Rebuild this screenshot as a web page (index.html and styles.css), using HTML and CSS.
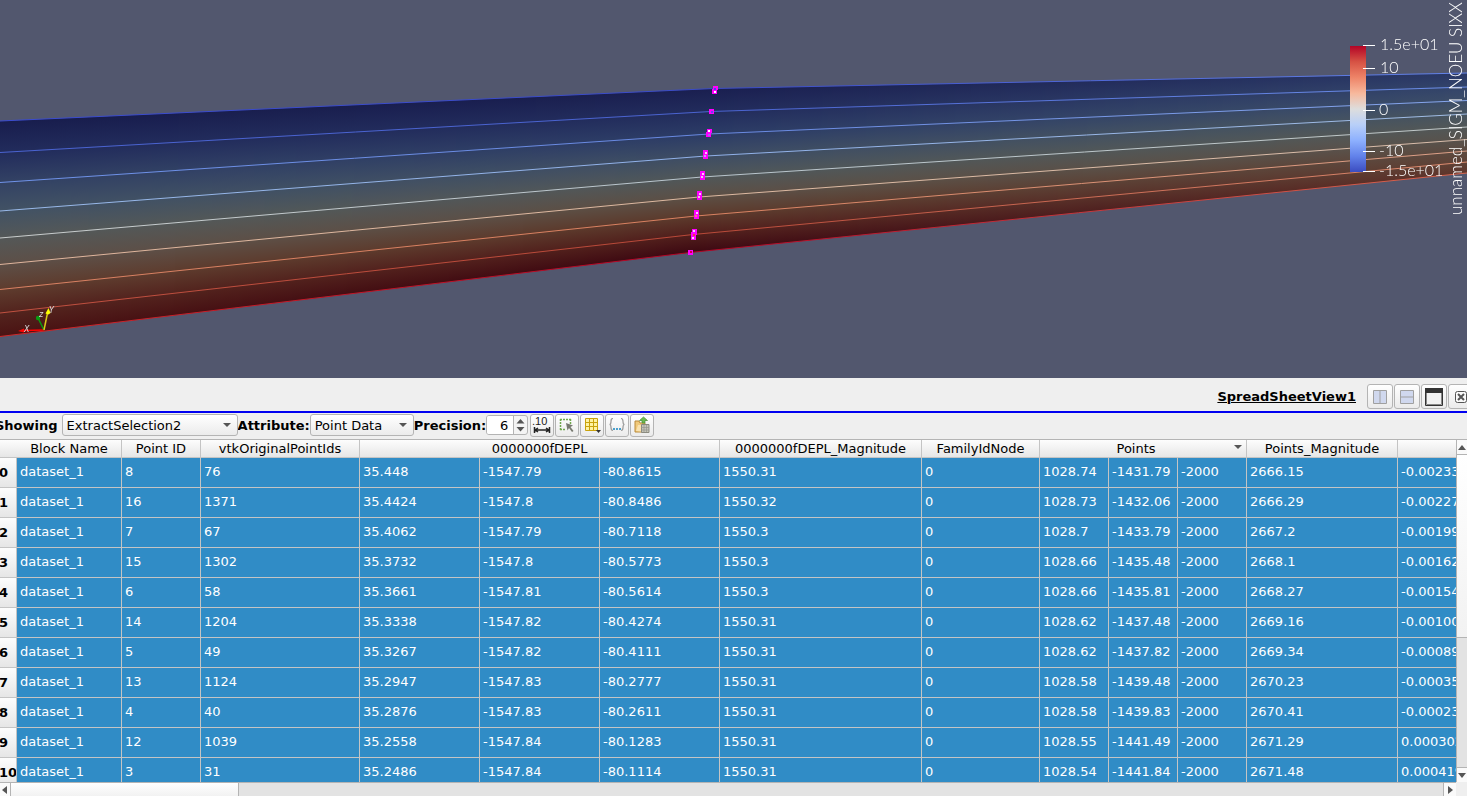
FILE: index.html
```html
<!DOCTYPE html>
<html lang="en">
<head>
    <meta charset="UTF-8">
    <meta name="viewport" content="width=device-width, initial-scale=1.0">
    <title>SpreadSheetView1</title>
    <link rel="stylesheet" href="styles.css">
</head>
<body>

    <section class="scene">
        <canvas id="render" class="render"></canvas>

        <svg class="axes" width="60" height="40" viewBox="0 0 60 40">
            <path d="M44 30L24 30.5" stroke="#f00" stroke-width="1.5"/>
            <path d="M18 31l6-2.5v4z" fill="#f00"/>
            <path d="M44 30L38.500 19" stroke="#0a9a12" stroke-width="1.500"/>
            <circle cx="38" cy="18" r="2.200" fill="#0a9a12"/>
            <path d="M44 30L47.500 13" stroke="#d8c81c" stroke-width="1.500"/>
            <path d="M48.500 8l2 5-2 1.500-3-1z" fill="#ff0"/>
            <text x="24" y="32">X</text>
            <text x="49" y="13">Y</text>
            <text x="39" y="17">z</text>
        </svg>

        <svg class="legend" width="127" height="220" viewBox="0 0 127 220">
            <defs>
                <linearGradient id="coolwarm" x1="0" y1="0" x2="0" y2="1">
                    <stop offset="0" stop-color="#b40426"/>
                    <stop offset="0.125" stop-color="#d65244"/>
                    <stop offset="0.25" stop-color="#ee8468"/>
                    <stop offset="0.375" stop-color="#f7b89c"/>
                    <stop offset="0.5" stop-color="#dddddd"/>
                    <stop offset="0.625" stop-color="#b8cff8"/>
                    <stop offset="0.75" stop-color="#8db0fe"/>
                    <stop offset="0.875" stop-color="#6282ea"/>
                    <stop offset="1" stop-color="#3b4cc0"/>
                </linearGradient>
            </defs>
            <rect x="10" y="46" width="16" height="126" fill="url(#coolwarm)"/>
            <path d="M23 45.500h12M23 68.500h12M23 110.500h12M23 151.500h12M23 171.500h12" stroke="#fff"/>
            <text x="40" y="50">1.5e+01</text>
            <text x="40" y="73">10</text>
            <text x="39" y="115">0</text>
            <text x="39" y="156">-10</text>
            <text x="39" y="176">-1.5e+01</text>
            <text class="legend-title" transform="translate(122 215) rotate(-90)">unnamed_SIGM_NOEU SIXX</text>
        </svg>
    </section>

    <main class="panel">
        <header class="view-header">
            <h1>SpreadSheetView1</h1>
            <div class="view-buttons">
                <button type="button" aria-label="Split horizontal">
                    <svg width="16" height="16"><path d="M1.500 1.500h13v13h-13z" fill="#d0d8ee" stroke="#a0a0a0"/><path d="M8 1v14" stroke="#a0a0a0"/></svg>
                </button>
                <button type="button" aria-label="Split vertical">
                    <svg width="16" height="16"><path d="M1.500 1.500h13v13h-13z" fill="#d0d8ee" stroke="#a0a0a0"/><path d="M1 8h14" stroke="#a0a0a0"/></svg>
                </button>
                <button type="button" aria-label="Maximize">
                    <svg width="18" height="18"><path d="M.5.5h17v17H.5z" fill="#f2f2f2" stroke="#333"/><path d="M0 0h18v5H0z" fill="#333"/><path d="M1.500 5v11.500h15V5" fill="none" stroke="#888"/></svg>
                </button>
                <button type="button" aria-label="Close">
                    <svg width="12" height="12"><rect x=".5" y=".5" width="11" height="11" rx="2" fill="#fafafa" stroke="#555"/><path d="M3 3l6 6M9 3l-6 6" stroke="#555" stroke-width="2"/></svg>
                </button>
            </div>
        </header>

        <div class="toolbar">
            <label for="showing">Showing</label>
            <span class="combo combo-showing">
                <select id="showing"><option>ExtractSelection2</option></select>
            </span>
            <label for="attribute">Attribute:</label>
            <span class="combo combo-attribute">
                <select id="attribute"><option>Point Data</option></select>
            </span>
            <label for="precision">Precision:</label>
            <span class="spin">
                <input id="precision" type="number" value="6">
                <svg width="13" height="18"><path d="M2.500 7.500h8L6.500 3zM2.500 11h8l-4 4.500z" fill="#555"/></svg>
            </span>
            <div class="tools">
                <button type="button" aria-label="Fixed representation">
                    <svg width="18" height="18"><text x="-1" y="9" class="fixed-label">.10</text><path d="M1.500 11v6M16.500 11v6M3 14h12M5 12l-3 2 3 2M13 12l3 2-3 2" fill="none" stroke="#222" stroke-width="1.500"/></svg>
                </button>
                <button type="button" aria-label="Show only selected elements">
                    <svg width="18" height="18"><path d="M2 3.500h11M2 13.500h6M2.500 3v11M12.500 3v5" fill="none" stroke="#6fa84c" stroke-width="1.500" stroke-dasharray="2 1"/><path d="M8 7l7 2.500-2.500 1.500 3 4-1.500 1-3-4-1.500 2.500z" fill="#77796f"/></svg>
                </button>
                <button type="button" aria-label="Toggle column visibility">
                    <svg width="18" height="18"><path d="M2.500 2.500h12v12h-12zM6.500 2v13M10.500 2v13M2 6.500h13M2 10.500h13" fill="#fff3a0" stroke="#c9a20c"/><path d="M13 14h5l-2.500 3z" fill="#333"/></svg>
                </button>
                <button type="button" aria-label="Toggle cell connectivity">
                    <svg width="18" height="18"><path d="M5 2.500c-2 0-2 1-2 3s0 3-1.500 3c1.500 0 1.500 1 1.500 3s0 3 2 3M13 2.500c2 0 2 1 2 3s0 3 1.500 3c-1.500 0-1.500 1-1.500 3s0 3-2 3" fill="none" stroke="#999" stroke-width="1.200"/><path d="M5 12h2v2H5zM8 12h2v2H8zM11 12h2v2h-2z" fill="#4ba0cc"/></svg>
                </button>
                <button type="button" aria-label="Export spreadsheet">
                    <svg width="18" height="18"><path d="M2 5h4l1 2h5v9H2z" fill="#f0c97a" stroke="#b98a3a"/><path d="M3 15l2-6h8v7z" fill="#fae2ae"/><path d="M8.500 8.500h7.500v8H8.500z" fill="#c4c4b8" stroke="#8b8b80"/><path d="M8 11.500h8M8 14h8M11 9v7M13.500 9v7" stroke="#97978c" stroke-width=".7"/><path d="M6.500 4.500L10.500 1l4 3.500h-2.500V7h-3V4.500z" fill="#6dbb52" stroke="#478c34" stroke-width=".7"/></svg>
                </button>
            </div>
        </div>

        <div class="sheet">
            <div class="sheet-view">
                <table>
                    <colgroup>
                        <col class="w-row"><col class="w-block"><col class="w-id"><col class="w-orig">
                        <col class="w-depl"><col class="w-depl"><col class="w-depl"><col class="w-mag">
                        <col class="w-family"><col class="w-point"><col class="w-point"><col class="w-point">
                        <col class="w-pmag"><col class="w-last">
                    </colgroup>
                    <thead>
                        <tr>
                            <th></th>
                            <th>Block Name</th>
                            <th>Point ID</th>
                            <th>vtkOriginalPointIds</th>
                            <th colspan="3">0000000fDEPL</th>
                            <th>0000000fDEPL_Magnitude</th>
                            <th>FamilyIdNode</th>
                            <th colspan="3" class="sorted">Points</th>
                            <th>Points_Magnitude</th>
                            <th></th>
                        </tr>
                    </thead>
                    <tbody>
                        <tr><th>0</th><td>dataset_1</td><td>8</td><td>76</td><td>35.448</td><td>-1547.79</td><td>-80.8615</td><td>1550.31</td><td>0</td><td>1028.74</td><td>-1431.79</td><td>-2000</td><td>2666.15</td><td>-0.00233</td></tr>
                        <tr><th>1</th><td>dataset_1</td><td>16</td><td>1371</td><td>35.4424</td><td>-1547.8</td><td>-80.8486</td><td>1550.32</td><td>0</td><td>1028.73</td><td>-1432.06</td><td>-2000</td><td>2666.29</td><td>-0.00227</td></tr>
                        <tr><th>2</th><td>dataset_1</td><td>7</td><td>67</td><td>35.4062</td><td>-1547.79</td><td>-80.7118</td><td>1550.3</td><td>0</td><td>1028.7</td><td>-1433.79</td><td>-2000</td><td>2667.2</td><td>-0.00199</td></tr>
                        <tr><th>3</th><td>dataset_1</td><td>15</td><td>1302</td><td>35.3732</td><td>-1547.8</td><td>-80.5773</td><td>1550.3</td><td>0</td><td>1028.66</td><td>-1435.48</td><td>-2000</td><td>2668.1</td><td>-0.00162</td></tr>
                        <tr><th>4</th><td>dataset_1</td><td>6</td><td>58</td><td>35.3661</td><td>-1547.81</td><td>-80.5614</td><td>1550.3</td><td>0</td><td>1028.66</td><td>-1435.81</td><td>-2000</td><td>2668.27</td><td>-0.00154</td></tr>
                        <tr><th>5</th><td>dataset_1</td><td>14</td><td>1204</td><td>35.3338</td><td>-1547.82</td><td>-80.4274</td><td>1550.31</td><td>0</td><td>1028.62</td><td>-1437.48</td><td>-2000</td><td>2669.16</td><td>-0.00100</td></tr>
                        <tr><th>6</th><td>dataset_1</td><td>5</td><td>49</td><td>35.3267</td><td>-1547.82</td><td>-80.4111</td><td>1550.31</td><td>0</td><td>1028.62</td><td>-1437.82</td><td>-2000</td><td>2669.34</td><td>-0.00089</td></tr>
                        <tr><th>7</th><td>dataset_1</td><td>13</td><td>1124</td><td>35.2947</td><td>-1547.83</td><td>-80.2777</td><td>1550.31</td><td>0</td><td>1028.58</td><td>-1439.48</td><td>-2000</td><td>2670.23</td><td>-0.00035</td></tr>
                        <tr><th>8</th><td>dataset_1</td><td>4</td><td>40</td><td>35.2876</td><td>-1547.83</td><td>-80.2611</td><td>1550.31</td><td>0</td><td>1028.58</td><td>-1439.83</td><td>-2000</td><td>2670.41</td><td>-0.00023</td></tr>
                        <tr><th>9</th><td>dataset_1</td><td>12</td><td>1039</td><td>35.2558</td><td>-1547.84</td><td>-80.1283</td><td>1550.31</td><td>0</td><td>1028.55</td><td>-1441.49</td><td>-2000</td><td>2671.29</td><td>0.000302</td></tr>
                        <tr><th>10</th><td>dataset_1</td><td>3</td><td>31</td><td>35.2486</td><td>-1547.84</td><td>-80.1114</td><td>1550.31</td><td>0</td><td>1028.54</td><td>-1441.84</td><td>-2000</td><td>2671.48</td><td>0.000419</td></tr>
                    </tbody>
                </table>
            </div>
            <div class="scroll-v">
                <span class="step"><svg width="8" height="5"><path d="M0 5h8L4 0z"/></svg></span>
                <span class="thumb"></span>
                <span class="track"></span>
                <span class="step"><svg width="8" height="5"><path d="M0 0h8L4 5z"/></svg></span>
            </div>
            <div class="scroll-h">
                <span class="step"><svg width="5" height="8"><path d="M5 0v8L0 4z"/></svg></span>
                <span class="thumb"></span>
                <span class="track"></span>
                <span class="step"><svg width="5" height="8"><path d="M0 0v8l5-4z"/></svg></span>
            </div>
        </div>
    </main>

    <script src="scene.js"></script>
</body>
</html>
```
FILE: styles.css
```css
* {
    box-sizing: border-box;
}

body {
    margin: 0;
    height: 100vh;
    display: flex;
    flex-direction: column;
    overflow: hidden;
    background-color: #efefef;
    color: #000;
    font-family: "DejaVu Sans", sans-serif;
    font-size: 13px;
}

svg {
    display: block;
    flex: none;
}

/* 3D view */
.scene {
    position: relative;
    flex: none;
    height: 378px;
    background-color: #52576e;
}

.render {
    display: block;
    width: 100%;
    height: 100%;
}

.axes {
    position: absolute;
    left: 0;
    bottom: 38px;
    fill: #ddd;
    font-size: 8px;
    font-style: italic;
}

.legend {
    position: absolute;
    top: 0;
    right: 0;
    fill: #fff;
    font-family: Lato, sans-serif;
    font-size: 16px;
    font-weight: 300;
}

.legend-title {
    font-size: 17px;
}

/* spreadsheet */
.panel {
    flex: 1;
    min-height: 0;
    margin-left: -2px;
    display: flex;
    flex-direction: column;
}

.view-header {
    flex: none;
    height: 35px;
    display: flex;
    justify-content: flex-end;
    align-items: center;
    gap: 11px;
    padding-top: 4px;
    border-bottom: 2px solid #0000f0;
}

.view-header h1 {
    margin: 0;
    font-size: 13px;
    text-decoration: underline;
}

.view-buttons {
    display: flex;
    gap: 1px;
    margin-right: -7px;
}

button {
    display: flex;
    align-items: center;
    justify-content: center;
    width: 24px;
    height: 23px;
    padding: 0;
    border: 1px solid #b4b4b4;
    border-radius: 3px;
    background: linear-gradient(#fff, #ebebeb);
}

.view-buttons button {
    width: 26px;
    height: 25px;
}

.toolbar {
    flex: none;
    height: 26px;
    margin-left: -3px;
    padding-bottom: 2px;
    display: flex;
    align-items: center;
}

.toolbar label {
    font-weight: bold;
    white-space: nowrap;
}

.tools {
    display: flex;
    gap: 1px;
}

.combo {
    position: relative;
    height: 22px;
}

.combo-showing {
    width: 176px;
    margin-left: 4px;
}

.combo-attribute {
    width: 104px;
}

.combo select {
    appearance: none;
    width: 100%;
    height: 100%;
    padding: 0 4px;
    border: 1px solid #b4b4b4;
    border-radius: 3px;
    background: linear-gradient(#fff, #ebebeb);
    color: #000;
    font: inherit;
}

.combo::after {
    content: "";
    position: absolute;
    top: 9px;
    right: 7px;
    border: 4px solid transparent;
    border-top-color: #555;
    border-bottom: 0;
    pointer-events: none;
}

.spin {
    display: flex;
    width: 42px;
    height: 20px;
    margin-right: 2px;
    border: 1px solid #b4b4b4;
    border-radius: 3px;
    background-color: #f4f4f4;
    overflow: hidden;
}

.spin input {
    width: 27px;
    padding: 0 5px 0 0;
    border: 0;
    border-right: 1px solid #b4b4b4;
    background-color: #fff;
    font: inherit;
    text-align: right;
    appearance: textfield;
}

.spin input::-webkit-inner-spin-button {
    display: none;
}

.tools svg {
    overflow: visible;
}

.fixed-label {
    font-size: 11px;
    fill: #222;
}

.sheet {
    flex: 1;
    min-height: 0;
    display: grid;
    grid-template-columns: minmax(0, 1fr) 11px;
    grid-template-rows: minmax(0, 1fr) 14px;
    border-top: 1px solid #b4b4b4;
}

.sheet-view {
    overflow: hidden;
    background-color: #fff;
}

table {
    width: 1490px;
    table-layout: fixed;
    border-collapse: separate;
    border-spacing: 0;
}

.w-row { width: 19px; }
.w-block { width: 105px; }
.w-id { width: 79px; }
.w-orig { width: 159px; }
.w-depl { width: 120px; }
.w-mag { width: 202px; }
.w-family { width: 118px; }
.w-point { width: 69px; }
.w-pmag { width: 151px; }

th,
td {
    padding: 0 3px;
    white-space: nowrap;
    overflow: hidden;
    border-right: 1px solid #c4c4c4;
    border-bottom: 1px solid #c4c4c4;
}

thead th {
    height: 18px;
    padding: 0;
    line-height: 17px;
    font-weight: normal;
    background: linear-gradient(#fdfdfd, #e6e6e6);
}

thead th:first-child {
    border-right: 0;
}

thead .sorted {
    position: relative;
    padding-right: 14px;
}

.sorted::after {
    content: "";
    position: absolute;
    top: 5px;
    right: 4px;
    border: 4px solid transparent;
    border-top-color: #555;
    border-bottom: 0;
}

tbody tr {
    height: 30px;
}

tbody th {
    padding: 0 0 0 1px;
    text-align: left;
    background: linear-gradient(#fdfdfd, #e6e6e6);
}

td {
    height: 30px;
    line-height: 28px;
    padding-bottom: 1px;
    background-color: #308cc6;
    color: #fff;
}

.scroll-v,
.scroll-h {
    display: flex;
    overflow: hidden;
    background-color: #e3e3e3;
}

.scroll-v {
    flex-direction: column;
    border-left: 1px solid #b4b4b4;
}

.scroll-h {
    border-top: 1px solid #b4b4b4;
}

.step {
    flex: none;
    display: flex;
    align-items: center;
    justify-content: center;
    background-color: #fafafa;
    fill: #555;
}

.scroll-v .step {
    height: 14px;
}

.scroll-h .step {
    width: 12px;
}

.thumb {
    border: solid #b4b4b4;
    background: linear-gradient(#fff, #f2f2f2);
}

.scroll-v .thumb {
    flex: 184;
    border-width: 1px 0;
}

.scroll-h .thumb {
    flex: 227;
    border-width: 0 1px;
}

.scroll-v .track {
    flex: 130;
    border-bottom: 1px solid #b4b4b4;
}

.scroll-h .track {
    flex: 1204;
    border-right: 1px solid #b4b4b4;
}
```
FILE: scene.js
```javascript
const canvas = document.getElementById("render");
const ctx = canvas.getContext("2d");

// three sections through the beam: left, selected nodes, right
const sections = [
    {
        x: [0, 0, 0, 0, 0, 0, 0, 0, 0],
        y: [121, 152.5, 182.5, 211, 238, 264.5, 289.5, 313, 336.5],
        fill: ["#181d4d", "#222c5c", "#334264", "#425264", "#545858", "#5d4f47", "#5e3c2e", "#53241e", "#4a1313"],
        line: ["#3b4cd0", "#4a63d0", "#6f92e8", "#98b8e8", "#c8cccc", "#dfb49c", "#d88062", "#c05040", "#d02828"]
    },
    {
        x: [714, 711, 709, 706, 702, 699, 696, 693, 690],
        y: [88.5, 111.5, 134, 156, 177, 197, 216, 234.5, 252.5],
        fill: ["#1a1f50", "#222c5c", "#2c3c66", "#3e4d64", "#505759", "#5c4f45", "#5c3a2c", "#511f1c", "#3d0912"],
        line: ["#3b4cc8", "#4a63d0", "#6888e0", "#90b0e8", "#b8c4cc", "#dcb8a0", "#d88060", "#b84838", "#b40426"]
    },
    {
        x: [1467, 1467, 1467, 1467, 1467, 1467, 1467, 1467, 1467],
        y: [73, 87, 100.5, 114, 127, 139.5, 151, 162, 173],
        fill: ["#2a3866", "#33446a", "#3c4d68", "#475460", "#525757", "#58524c", "#5c4a40", "#5f4236", "#5f352b"],
        line: ["#6484e8", "#6c8ee8", "#86a6ec", "#a0bce4", "#c0c8c8", "#d8bcaa", "#dca088", "#dc8c70", "#d86850"]
    }
];

// selected points: x, y, height
const marks = [
    [713, 86, 4], [712, 89, 5], [709, 109, 5], [707, 129, 4], [706, 132, 5],
    [703, 150, 9], [700, 171, 9], [697, 191, 9], [694, 210, 9],
    [692, 229, 6], [691, 232, 8], [688, 250, 5]
];

// centre pixels of the marks: x, y, colour
const dots = [
    [714, 88, "#4848e0"], [714, 91, "#fff"], [711, 111, "#7040f0"],
    [708, 130, "#fff"], [708, 134, "#b060f0"], [705, 152, "#fcf"], [704, 155, "#c8a0f0"],
    [702, 173, "#fcf"], [701, 176, "#f0c0f0"], [699, 193, "#fcf"], [698, 196, "#f0c0e0"],
    [696, 212, "#fcf"], [695, 215, "#f08080"], [693, 230, "#fcf"], [693, 234, "#f04040"],
    [692, 237, "#fcf"], [690, 251, "#d00040"]
];

function mix(a, b, t) {
    let out = [];
    for (let i = 1; i < 7; i += 2) {
        const p = parseInt(a.substr(i, 2), 16);
        const q = parseInt(b.substr(i, 2), 16);
        out.push(Math.round(p + (q - p) * t));
    }
    return `rgb(${out.join(",")})`;
}

function draw() {
    canvas.width = canvas.clientWidth;
    canvas.height = canvas.clientHeight;
    const scale = canvas.width / 1467;

    // shaded body, one column of pixels at a time
    for (let px = 0; px < canvas.width; px++) {
        const x = px / scale;
        const levels = [];
        for (let i = 0; i < 9; i++) {
            const a = x < sections[1].x[i] ? sections[0] : sections[1];
            const b = x < sections[1].x[i] ? sections[1] : sections[2];
            const t = (x - a.x[i]) / (b.x[i] - a.x[i]);
            levels.push({ y: a.y[i] + (b.y[i] - a.y[i]) * t, color: mix(a.fill[i], b.fill[i], t) });
        }
        const top = levels[0].y;
        const bottom = levels[8].y;
        const gradient = ctx.createLinearGradient(0, top, 0, bottom);
        levels.forEach(l => gradient.addColorStop((l.y - top) / (bottom - top), l.color));
        ctx.fillStyle = gradient;
        ctx.fillRect(px, top, 1, bottom - top);
    }

    // mesh edges
    for (let i = 0; i < 9; i++) {
        const stroke = ctx.createLinearGradient(0, 0, canvas.width, 0);
        ctx.beginPath();
        sections.forEach(s => {
            stroke.addColorStop(s.x[i] / 1467, s.line[i]);
            ctx.lineTo(s.x[i] * scale, s.y[i]);
        });
        ctx.strokeStyle = stroke;
        ctx.lineWidth = 1;
        ctx.stroke();
    }

    ctx.fillStyle = "#ff00ff";
    marks.forEach(m => ctx.fillRect(Math.round(m[0] * scale), m[1], 5, m[2]));
    dots.forEach(d => {
        ctx.fillStyle = d[2];
        ctx.fillRect(Math.round(d[0] * scale), d[1], 2, 2);
    });
}

draw();
window.addEventListener("resize", draw);
```
